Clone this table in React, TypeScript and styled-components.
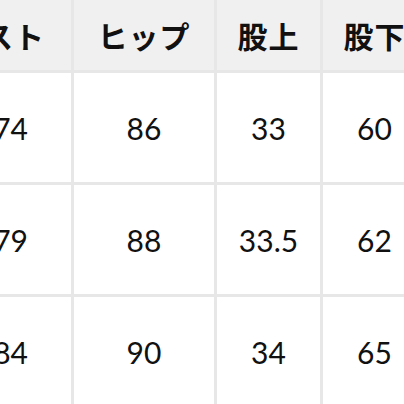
import styled, { createGlobalStyle } from "styled-components";

const GlobalStyle = createGlobalStyle`
  html, body {
    margin: 0;
    padding: 0;
    background: #ffffff;
    overflow: hidden;
  }
`;

const Viewport = styled.div`
  width: 404px;
  height: 404px;
  overflow: hidden;
  background: #ffffff;
`;

const SizeTable = styled.div`
  display: grid;
  grid-template-columns: 71px 140px 103px 103px;
  grid-template-rows: 70px 109px 109px 109px;
  gap: 3px;
  width: max-content;
  background: #e7e7e7;
`;

const Cell = styled.div<{ $head?: boolean; $edge?: number }>`
  display: flex;
  align-items: center;
  justify-content: ${(p) => (p.$edge !== undefined ? "flex-end" : "center")};
  padding-right: ${(p) => (p.$edge !== undefined ? `${p.$edge}px` : "0")};
  white-space: nowrap;
  background: ${(p) => (p.$head ? "#f0f0f0" : "#ffffff")};
  color: #111111;
  font-family: ${(p) =>
    p.$head
      ? `"Noto Sans CJK JP", "Noto Sans", sans-serif`
      : `Lato, "Noto Sans", sans-serif`};
  font-size: 30px;
  font-weight: ${(p) => (p.$head ? 700 : 400)};
  letter-spacing: ${(p) => (p.$head ? "1px" : "0")};
`;

const headers = ["ウエスト", "ヒップ", "股上", "股下"];

const rows = [
  ["74", "86", "33", "60"],
  ["79", "88", "33.5", "62"],
  ["84", "90", "34", "65"],
];

export default function App() {
  return (
    <Viewport>
      <GlobalStyle />
      <SizeTable>
        {headers.map((h, i) => (
          <Cell key={h} $head $edge={i === 0 ? 26 : undefined}>
            {h}
          </Cell>
        ))}
        {rows.map((row, r) =>
          row.map((v, c) => (
            <Cell key={`${r}-${c}`} $edge={c === 0 ? 43 : undefined}>
              {v}
            </Cell>
          ))
        )}
      </SizeTable>
    </Viewport>
  );
}
